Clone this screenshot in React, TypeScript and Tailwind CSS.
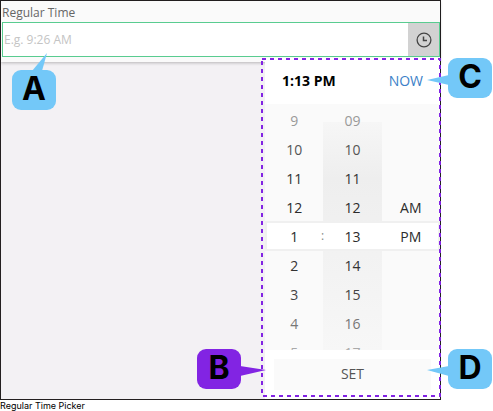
import { useState } from "react";

const HOURS = ["9", "10", "11", "12", "1", "2", "3", "4", "5"];
const MINUTES = ["09", "10", "11", "12", "13", "14", "15", "16", "17"];
const PERIODS = ["", "", "", "AM", "PM"];

const SHADES = [
  "text-[#999]",
  "text-[#555]",
  "text-[#333]",
  "text-[#2b2b2b]",
  "text-[#2b2b2b]",
  "text-[#333]",
  "text-[#444]",
  "text-[#777]",
  "text-[#aaa]",
];

function ClockIcon() {
  return (
    <svg viewBox="0 0 16 16" className="size-4" fill="none" stroke="#444">
      <circle cx="8" cy="8" r="6.9" strokeWidth="1.3" />
      <path d="M7.5 4.5V8.5H11" strokeWidth="1.5" />
    </svg>
  );
}

function Wheel({ label, values }: { label: string; values: string[] }) {
  return (
    <ul aria-label={label} className="relative flex-1 pt-[2px]">
      {values.map((value, i) => (
        <li key={i} className="h-[29px]">
          {value && (
            <button
              type="button"
              className={`block h-[29px] w-full text-center text-sm ${SHADES[i]}`}>
              {value}
            </button>
          )}
        </li>
      ))}
    </ul>
  );
}

function Callout({
  letter,
  place,
  color,
  children,
}: {
  letter: string;
  place: string;
  color: string;
  children: React.ReactNode;
}) {
  return (
    <div className={`absolute z-20 h-10 w-11 ${place}`}>
      <svg
        viewBox="0 0 44 40"
        className={`absolute inset-0 h-10 w-11 overflow-visible ${color}`}
        fill="currentColor">
        <rect width="44" height="40" rx="9" />
        {children}
      </svg>
      <span className="relative block text-center font-['Inter',sans-serif] text-[32px] leading-[38px] font-bold text-black">
        {letter}
      </span>
    </div>
  );
}

function TimePicker({ time }: { time: string }) {
  return (
    <div className="relative ml-auto w-[175px] bg-white">
      <div className="flex h-[46px] items-center justify-between px-[17px] text-sm">
        <strong className="font-bold text-black">{time}</strong>
        <button type="button" className="text-[#3b80c8]">
          NOW
        </button>
      </div>

      <div className="relative flex h-[246px] overflow-hidden bg-[#fafafa]">
        <div className="absolute inset-x-[58px] top-[18px] bottom-0 bg-linear-to-b from-[#f6f6f6] via-[#eee] via-25% to-[#f7f7f7]" />
        <div className="absolute inset-x-0 top-[117px] h-[30px] border-2 border-[#f0f0f0] bg-white" />
        <Wheel label="Hours" values={HOURS} />
        <span className="absolute top-[118px] left-[56px] text-xs leading-7 text-[#888]">
          :
        </span>
        <Wheel label="Minutes" values={MINUTES} />
        <Wheel label="AM or PM" values={PERIODS} />
      </div>

      <div className="px-[9px] py-[9px]">
        <button
          type="button"
          className="block h-[31px] w-full bg-[#fafafa] pb-[2px] text-sm text-[#555]">
          SET
        </button>
      </div>

      {/* Highlighted area */}
      <svg
        className="pointer-events-none absolute top-0 -left-[3px] z-10 h-[339px] w-[179px] overflow-visible"
        fill="none"
        stroke="#8224e3"
        strokeWidth="2"
        strokeDasharray="4 4">
        <rect x="0" y="1" width="178" height="337" />
      </svg>
    </div>
  );
}

export default function App() {
  const [value, setValue] = useState("");

  return (
    <figure className="relative pr-[52px] font-['Open_Sans',sans-serif]">
      <div className="border border-[#231f20] bg-[#f3f1f4]">
        <div className="relative bg-[#fafafa] pb-[5px] shadow-[0_1px_3px_rgba(0,0,0,0.25)]">
          <label
            htmlFor="time"
            className="block h-[21px] pt-[2px] pl-px text-xs leading-5 text-[#666]">
            Regular Time
          </label>
          <div className="ml-px flex h-[35px] border border-[#59cc90] bg-white">
            <input
              id="time"
              type="text"
              value={value}
              onChange={(e) => setValue(e.target.value)}
              placeholder="E.g. 9:26 AM"
              className="min-w-0 flex-1 bg-white pl-px text-xs text-[#333] outline-none placeholder:text-[#c4c4c4]"
            />
            <button
              type="button"
              aria-label="Pick a time"
              className="flex w-[31px] items-center justify-center bg-[#d2d2d2]">
              <ClockIcon />
            </button>
          </div>
        </div>

        <div className="relative -mt-[4px]">
          <TimePicker time="1:13 PM" />
        </div>
      </div>

      <figcaption className="font-['Inter',sans-serif] text-[9px] leading-3 text-black">
        Regular Time Picker
      </figcaption>

      <Callout letter="A" place="left-3 top-[70px]" color="text-[#73c8f8]">
        <path d="M20 1 35 -17 30 1z" />
      </Callout>
      <Callout letter="B" place="right-[252px] top-[349px]" color="text-[#8224e3]">
        <path d="M43 17 69 21 43 27z" />
      </Callout>
      <Callout letter="C" place="right-px top-[58px]" color="text-[#73c8f8]">
        <path d="M1 17 -21 22 1 27z" />
      </Callout>
      <Callout letter="D" place="right-px top-[349px]" color="text-[#73c8f8]">
        <path d="M1 17 -21 21 1 27z" />
      </Callout>
    </figure>
  );
}
